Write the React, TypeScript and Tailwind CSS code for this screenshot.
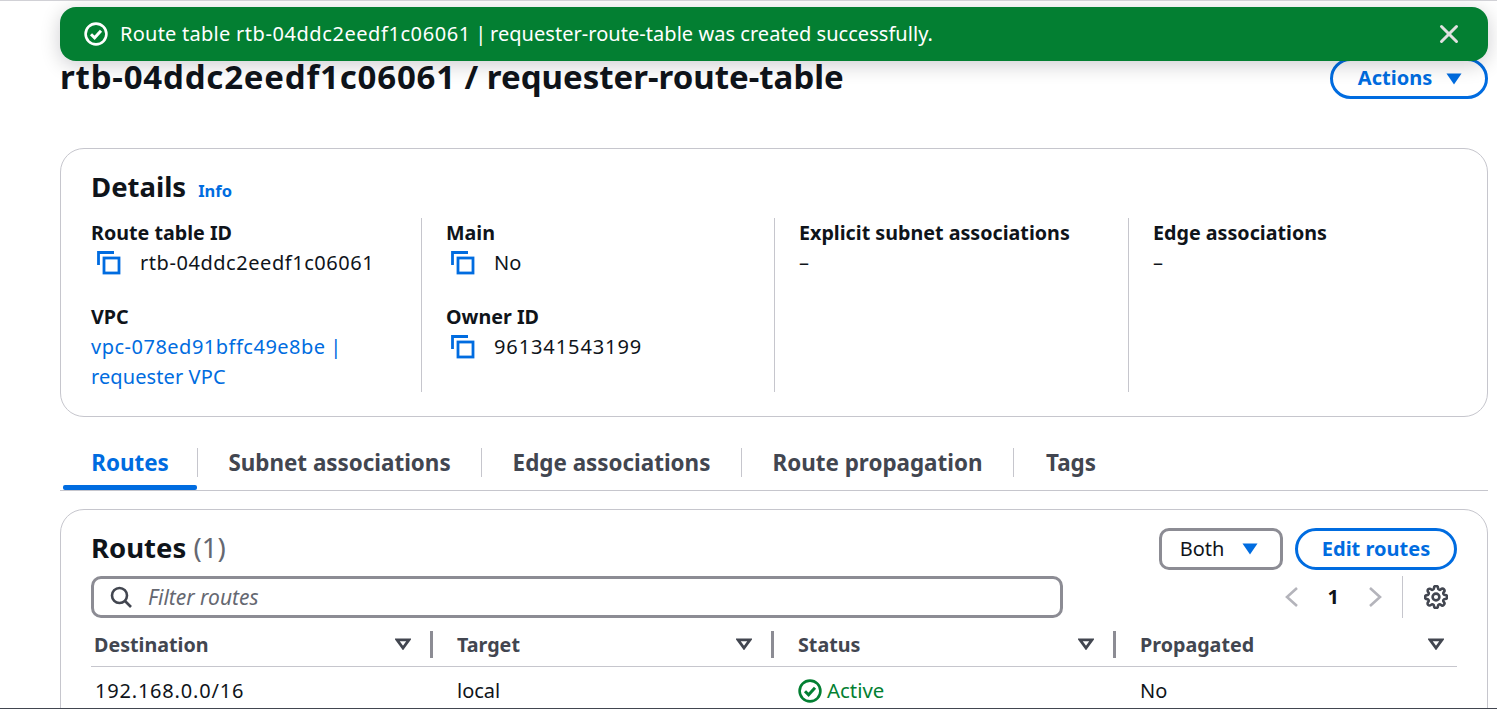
import React from "react";
import { X } from "lucide-react";

const CopyIcon = () => (
  <svg width="24" height="24" viewBox="0 0 24 24" fill="none" stroke="#006ce0" strokeWidth="2.8" className="shrink-0">
    <path d="M1.5 14V1.5H17" />
    <rect x="7" y="7" width="15" height="15" />
  </svg>
);

const CheckCircle = ({ color, size }: { color: string; size: number }) => (
  <svg width={size} height={size} viewBox="0 0 24 24" fill="none" stroke={color} strokeWidth="2.6">
    <circle cx="12" cy="12" r="10.4" />
    <path d="M7 12.2l3.6 3.6L17 8.8" strokeWidth="3" />
  </svg>
);

const Caret = ({ className }: { className?: string }) => (
  <svg width="16" height="12" viewBox="0 0 16 12" className={className}>
    <path d="M0.5 0.5h15L8 11.5z" fill="currentColor" />
  </svg>
);

const SortCaret = () => (
  <svg width="16" height="12" viewBox="0 0 16 12" fill="none" stroke="#424650" strokeWidth="2.8" className="shrink-0">
    <path d="M2 1.8h12L8 10z" />
  </svg>
);

const Field = ({ label, children }: { label: string; children: React.ReactNode }) => (
  <div>
    <div className="text-[19.7px] leading-[30px] font-bold text-[#0f141a]">{label}</div>
    {children}
  </div>
);

const CopyValue = ({ value, tracking, inset }: { value: string; tracking?: string; inset: string }) => (
  <div className={`flex items-center h-[30px] text-[20px] text-[#0f141a] ${inset}`}>
    <CopyIcon />
    <span className={`ml-[19px] ${tracking ?? ""}`}>{value}</span>
  </div>
);

const Tab = ({ label, width, active }: { label: string; width: string; active?: boolean }) => (
  <div className={`relative flex items-center justify-center h-[53px] pb-[2px] ${width}`}>
    <span className={`text-[22.4px] font-bold ${active ? "text-[#006ce0]" : "text-[#424650]"}`}>{label}</span>
    {active && <div className="absolute bottom-0 left-0 right-0 h-[5px] rounded-[2px] bg-[#006ce0]" />}
  </div>
);

const HeadCell = ({ label, width, inset, last }: { label: string; width: string; inset: string; last?: boolean }) => (
  <div className={`flex items-center h-[44px] ${width}`}>
    <span className={`flex-1 pt-[2px] text-[19.7px] font-bold text-[#424650] ${inset}`}>{label}</span>
    <SortCaret />
    {!last && <div className="w-[3px] h-[27px] ml-[19px] mr-[22px] bg-[#8c8c94]" />}
    {last && <div className="w-[13px]" />}
  </div>
);

export default function App() {
  return (
    <div
      className="relative h-[709px] overflow-hidden border-t border-b border-t-[#d1d1d6] border-b-[#424650] bg-white pl-[60px] pr-[9px]"
      style={{ fontFamily: '"Noto Sans", sans-serif' }}
    >
      {/* Flash banner */}
      <div className="absolute top-[6px] left-[60px] right-[9px] z-10 flex h-[54px] items-center rounded-[16px] bg-[#037f32] pl-[24px] pr-[24px] text-white shadow-[0_4px_20px_rgba(0,7,22,0.2)]">
        <CheckCircle color="#ffffff" size={24} />
        <span className="ml-[12px] flex-1 text-[20px]">
          <span className="tracking-[0.25px]">Route table </span>
          <span className="tracking-[0.57px]">rtb-04ddc2eedf1c06061</span>
          <span className="tracking-[-0.7px]"> | </span>
          <span className="tracking-[0.04px]">requester-route-table was created successfully.</span>
        </span>
        <X size={30} strokeWidth={2.4} color="#e0e0e0" />
      </div>

      {/* Page header */}
      <div className="flex h-[147px] items-start justify-between pt-[55px]">
        <h1 className="text-[33px] leading-[42px] font-bold text-[#0f141a]">
          <span className="tracking-[0.8px]">rtb-04ddc2eedf1c06061</span> / requester-route-table
        </h1>
        <div className="mt-[2px] flex h-[41px] w-[158px] items-center justify-center gap-[14px] rounded-full border-[3px] border-[#006ce0] pb-[2px] pl-[2px] text-[20px] font-bold text-[#006ce0]">
          Actions
          <Caret className="mt-[2px]" />
        </div>
      </div>

      {/* Details */}
      <section className="h-[269px] rounded-[24px] border border-[#c6c6cd] pl-[30px] pt-[17px]">
        <div className="flex items-baseline">
          <h2 className="text-[27.5px] leading-[42px] font-bold text-[#0f141a]">Details</h2>
          <span className="ml-[12px] text-[16.5px] font-bold text-[#006ce0]">Info</span>
        </div>
        <div className="mt-[10px] grid h-[174px] grid-cols-[331px_353px_354px_1fr]">
          <div className="flex flex-col gap-[24px] border-r border-[#c6c6cd]">
            <Field label="Route table ID">
              <CopyValue value="rtb-04ddc2eedf1c06061" tracking="tracking-[0.55px]" inset="pl-[6px]" />
            </Field>
            <Field label="VPC">
              <div className="w-[280px] text-[20px] leading-[30px] text-[#006ce0]">
                <span className="tracking-[0.5px]">vpc-078ed91bffc49e8be</span>
                <span className="tracking-[-0.7px]"> | </span>
                <span className="tracking-[0.1px]">requester VPC</span>
              </div>
            </Field>
          </div>
          <div className="flex flex-col gap-[24px] border-r border-[#c6c6cd] pl-[24px]">
            <Field label="Main">
              <CopyValue value="No" inset="pl-[5px]" />
            </Field>
            <Field label="Owner ID">
              <CopyValue value="961341543199" tracking="tracking-[0.9px]" inset="pl-[5px]" />
            </Field>
          </div>
          <div className="border-r border-[#c6c6cd] pl-[24px]">
            <Field label="Explicit subnet associations">
              <div className="text-[20px] leading-[30px] text-[#0f141a]">–</div>
            </Field>
          </div>
          <div className="pl-[24px]">
            <Field label="Edge associations">
              <div className="text-[20px] leading-[30px] text-[#0f141a]">–</div>
            </Field>
          </div>
        </div>
      </section>

      {/* Tabs */}
      <div className="mt-[20px] flex h-[54px] border-b border-[#c6c6cd] pl-[3px]">
        <Tab label="Routes" width="w-[134px]" active />
        <div className="mt-[11px] h-[29px] w-px bg-[#c6c6cd]" />
        <Tab label="Subnet associations" width="w-[283px]" />
        <div className="mt-[11px] h-[29px] w-px bg-[#c6c6cd]" />
        <Tab label="Edge associations" width="w-[259px]" />
        <div className="mt-[11px] h-[29px] w-px bg-[#c6c6cd]" />
        <Tab label="Route propagation" width="w-[271px]" />
        <div className="mt-[11px] h-[29px] w-px bg-[#c6c6cd]" />
        <Tab label="Tags" width="w-[114px]" />
      </div>

      {/* Routes table */}
      <section className="mt-[18px] h-[260px] rounded-[24px] border border-[#c6c6cd] px-[30px] pt-[17px]">
        <div className="flex items-start justify-between">
          <h2 className="text-[27.5px] leading-[42px] font-bold text-[#0f141a]">
            Routes <span className="font-normal text-[#656871]">(1)</span>
          </h2>
          <div className="mt-[1px] flex gap-[12px]">
            <div className="flex h-[42px] w-[124px] items-center justify-center gap-[18px] rounded-[10px] border-[3px] border-[#8c8c94] pr-[4px] text-[20px] text-[#0f141a]">
              Both
              <Caret className="text-[#006ce0]" />
            </div>
            <div className="flex h-[42px] w-[162px] items-center justify-center rounded-full border-[3px] border-[#006ce0] text-[20px] font-bold text-[#006ce0]">
              Edit routes
            </div>
          </div>
        </div>

        <div className="mt-[6px] flex items-center justify-between">
          <div className="flex h-[42px] w-[972px] items-center rounded-[10px] border-[3px] border-[#8c8c94] pl-[15px]">
            <svg width="24" height="24" viewBox="0 0 24 24" fill="none" stroke="#424650" strokeWidth="2.6">
              <circle cx="10.5" cy="10.5" r="7.5" />
              <path d="M16 16l6 6" />
            </svg>
            <span className="ml-[15px] pt-[1px] text-[21px] italic text-[#656871]">Filter routes</span>
          </div>
          <div className="flex items-center">
            <svg width="16" height="22" viewBox="0 0 16 22" fill="none" stroke="#b4b4bb" strokeWidth="2.6">
              <path d="M13 2L3 11l10 9" />
            </svg>
            <span className="ml-[28px] mr-[28px] text-[20px] font-bold text-[#0f141a]">1</span>
            <svg width="16" height="22" viewBox="0 0 16 22" fill="none" stroke="#b4b4bb" strokeWidth="2.6">
              <path d="M3 2l10 9-10 9" />
            </svg>
            <div className="ml-[19px] h-[42px] w-px bg-[#c6c6cd]" />
            <svg width="24" height="24" viewBox="0 0 24 24" fill="none" stroke="#424650" strokeWidth="2.6" className="ml-[21px] mr-[9px]">
              <circle cx="12" cy="12" r="3.4" />
              <path d="M19.4 15a1.7 1.7 0 0 0 .3 1.8l.1.1a2 2 0 1 1-2.9 2.9l-.1-.1a1.7 1.7 0 0 0-2.8 1.2v.2a2 2 0 0 1-4 0v-.1a1.7 1.7 0 0 0-2.9-1.2l-.1.1a2 2 0 1 1-2.8-2.9l.1-.1a1.7 1.7 0 0 0-1.2-2.8H3a2 2 0 0 1 0-4h.1a1.7 1.7 0 0 0 1.2-2.9l-.1-.1a2 2 0 1 1 2.9-2.8l.1.1a1.7 1.7 0 0 0 2.8-1.2V3a2 2 0 0 1 4 0v.1a1.7 1.7 0 0 0 2.9 1.2l.1-.1a2 2 0 1 1 2.8 2.9l-.1.1a1.7 1.7 0 0 0 1.2 2.8h.2a2 2 0 0 1 0 4h-.1a1.7 1.7 0 0 0-1.6 1z" />
            </svg>
          </div>
        </div>

        <div className="mt-[4px] flex border-b border-[#c6c6cd]">
          <HeadCell label="Destination" width="w-[364px]" inset="pl-[3px]" />
          <HeadCell label="Target" width="w-[341px]" inset="pl-[2px]" />
          <HeadCell label="Status" width="w-[342px]" inset="pl-[2px]" />
          <HeadCell label="Propagated" width="flex-1" inset="pl-[2px]" last />
        </div>
        <div className="flex h-[48px] items-center text-[20px] leading-[30px] text-[#0f141a]">
          <div className="w-[364px] pl-[4px] tracking-[0.8px]">192.168.0.0/16</div>
          <div className="w-[341px] pl-[2px]">local</div>
          <div className="flex w-[342px] items-center gap-[5px] pl-[2px] text-[#037f32]">
            <CheckCircle color="#037f32" size={24} />
            <span className="mb-[2px] text-[20.4px] leading-[28px]">Active</span>
          </div>
          <div className="pl-[2px]">No</div>
        </div>
      </section>
    </div>
  );
}
